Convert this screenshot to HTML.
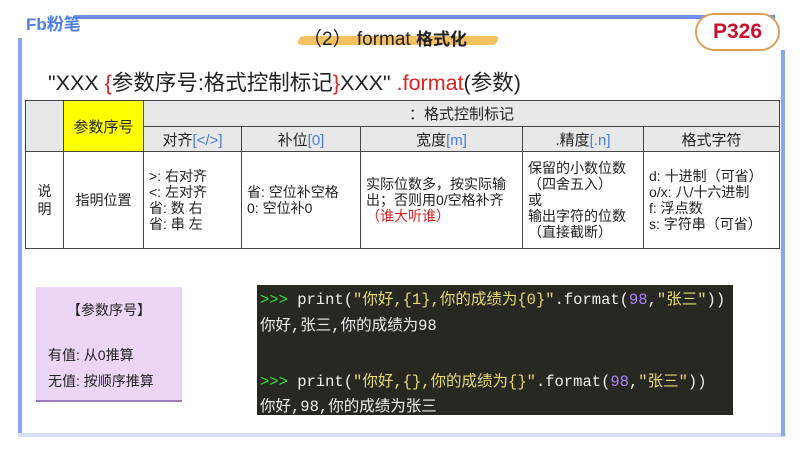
<!DOCTYPE html>
<html><head><meta charset="utf-8"><style>
*{margin:0;padding:0;box-sizing:border-box}
body{width:800px;height:450px;background:#fff;position:relative;overflow:hidden;font-family:"Liberation Sans","Noto Sans CJK SC",sans-serif;color:#222}
.abs{position:absolute}
table{position:absolute;left:25px;top:100px;border-collapse:collapse;font-size:14px;table-layout:fixed}
td{border:1px solid #444;text-align:center;vertical-align:middle;padding:0;overflow:hidden;white-space:nowrap}
.g{background:#e8e8e8}
.b{color:#4a7bd8}
.l{text-align:left;padding-left:5px;line-height:16px}
.code{font-family:"Liberation Mono","Noto Sans CJK SC",monospace;font-size:15.5px;color:#eee;position:absolute;left:3px;white-space:pre}
.y{color:#e6db74}.p{color:#ae81ff}.gr{color:#3ddc3d}
</style></head><body>
<div class="abs" style="left:75px;top:15px;width:700px;height:4px;background:#6f8ff0"></div>
<div class="abs" style="left:18px;top:38px;width:4px;height:398px;background:#8aa6f3"></div>
<div class="abs" style="left:18px;top:433px;width:768px;height:4px;background:#d6def8"></div>
<div class="abs" style="left:781px;top:50px;width:4px;height:386px;background:#8aa6f3"></div>
<div class="abs" style="left:26px;top:10px;font-size:17px;font-weight:bold;color:#4d7fe6">Fb粉笔</div>
<div class="abs" style="left:298px;top:36px;width:200px;height:9px;background:#f2b13a;opacity:.8;border-radius:5px;transform:skew(-20deg)"></div>
<div class="abs" style="left:303px;top:24px;font-size:19px;color:#222">（2） format <b style="font-size:17px">格式化</b></div>
<div class="abs" style="left:695px;top:13px;width:85px;height:38px;background:#fff;border:2px solid #d9a15a;border-radius:20px;text-align:center;font-size:21px;font-weight:bold;color:#c8102e;line-height:34px">P326</div>
<div class="abs" style="left:48px;top:66px;font-size:21.5px;color:#222">"XXX <span style="color:#d22">{</span>参数序号:格式控制标记<span style="color:#d22">}</span>XXX" <span style="color:#d22">.format</span>(参数)</div>
<table>
<colgroup><col style="width:38px"><col style="width:80px"><col style="width:98px"><col style="width:119px"><col style="width:162px"><col style="width:121px"><col style="width:136px"></colgroup>
<tr style="height:26px"><td class="g" rowspan="2"></td><td rowspan="2" style="background:#ffff00;font-size:15px">参数序号</td><td class="g" colspan="5" style="font-size:15px">：格式控制标记</td></tr>
<tr style="height:25px" class="g"><td style="font-size:15px">对齐<span class="b">[&lt;/&gt;]</span></td><td style="font-size:15px">补位<span class="b">[0]</span></td><td style="font-size:15px">宽度<span class="b">[m]</span></td><td style="font-size:15px">.精度<span class="b">[.n]</span></td><td style="font-size:15px">格式字符</td></tr>
<tr style="height:97px"><td style="line-height:18px">说<br>明</td><td>指明位置</td><td class="l">&gt;: 右对齐<br>&lt;: 左对齐<br>省: 数 右<br>省: 串 左</td><td class="l">省: 空位补空格<br>0: 空位补0</td><td class="l">实际位数多，按实际输<br>出；否则用0/空格补齐<br><span style="color:#d22">（谁大听谁）</span></td><td class="l">保留的小数位数<br>（四舍五入）<br>或<br>输出字符的位数<br>（直接截断）</td><td class="l">d: 十进制（可省）<br>o/x: 八/十六进制<br>f: 浮点数<br>s: 字符串（可省）</td></tr>
</table>
<div class="abs" style="left:36px;top:287px;width:146px;height:115px;background:#ecd5f7;border-bottom:2px solid #9a7ab8;font-size:14px">
<div style="text-align:center;margin-top:13px">【参数序号】</div>
<div style="margin:25px 0 0 12px">有值: 从0推算</div>
<div style="margin:6px 0 0 12px">无值: 按顺序推算</div></div>
<div class="abs" style="left:257px;top:285px;width:476px;height:130px;background:#272822">
<div class="code" style="top:2px"><span class="gr">&gt;&gt;&gt;</span> print(<span class="y">"你好,{1},你的成绩为{0}"</span>.format(<span class="p">98</span>,<span class="y">"张三"</span>))</div>
<div class="code" style="top:28px">你好,张三,你的成绩为98</div>
<div class="code" style="top:84px"><span class="gr">&gt;&gt;&gt;</span> print(<span class="y">"你好,{},你的成绩为{}"</span>.format(<span class="p">98</span>,<span class="y">"张三"</span>))</div>
<div class="code" style="top:109px">你好,98,你的成绩为张三</div>
</div>
</body></html>
